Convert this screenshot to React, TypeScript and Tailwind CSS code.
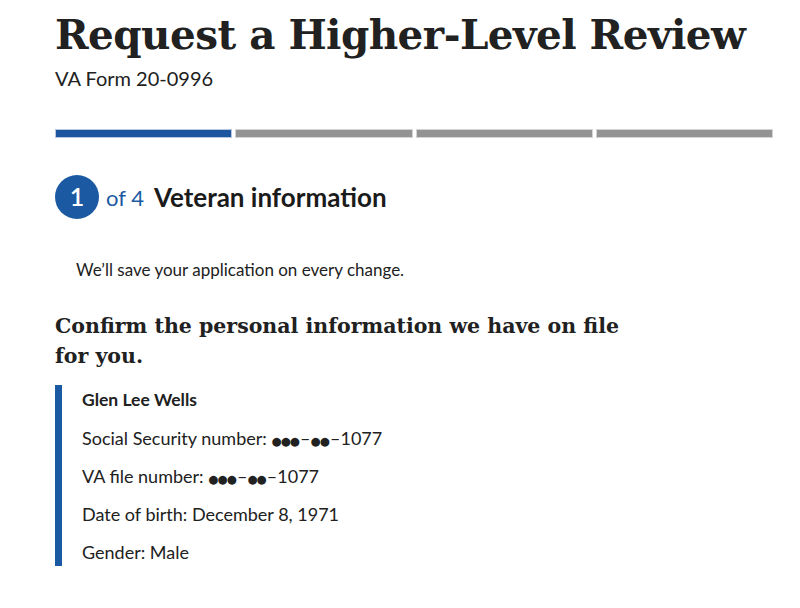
import React from 'react';

const serif = "font-['DejaVu_Serif',serif]";

const segments = [true, false, false, false];

const Dots = ({ n }: { n: number }) => (
  <span className="font-['DejaVu_Sans',sans-serif] text-[11.5px] leading-none tracking-[-0.8px] mr-[1px]">
    {'●'.repeat(n)}
  </span>
);

const row = 'text-[18px] leading-[22px] h-[22px] mt-[16px] whitespace-nowrap';

export default function App() {
  return (
    <div className="min-h-screen bg-white text-[#212121] font-['Lato',sans-serif]">
      <div className="pl-[55px] pr-[27px] pt-[9px]">
        {/* Title */}
        <h1 className={`${serif} font-bold text-[40.5px] leading-[52px] tracking-[-0.55px]`}>
          Request a Higher-Level Review
        </h1>
        <div className="text-[20px] leading-[26px] mt-[4px]">VA Form 20-0996</div>

        {/* Progress segments */}
        <div className="flex gap-[3px] mt-[38px]">
          {segments.map((done, i) => (
            <div
              key={i}
              className={
                done
                  ? 'flex-1 h-[9px] bg-[#1b55a0] border border-[#b9c6dd]'
                  : 'flex-1 h-[9px] bg-[#939393] border border-[#d4d4d4]'
              }
            />
          ))}
        </div>

        {/* Step heading */}
        <div className="flex items-center mt-[37px]">
          <div className="w-[44px] h-[44px] rounded-full bg-[#1b5aa2] text-white flex items-center justify-center text-[25px] font-semibold">
            1
          </div>
          <span className="ml-[7px] text-[#1b5aa2] text-[22px]">of 4</span>
          <span className="ml-[10px] font-bold text-[26px] text-[#1b1b1b]">Veteran information</span>
        </div>

        <p className="ml-[21px] mt-[39px] text-[17px] leading-[24px]">
          We’ll save your application on every change.
        </p>

        <h2 className={`${serif} font-bold text-[20.5px] leading-[30px] mt-[29px] max-w-[600px]`}>
          Confirm the personal information we have on file for you.
        </h2>

        {/* Veteran details */}
        <div className="mt-[14px] border-l-[7px] border-[#1b5aa2] pl-[20px] pt-[4px] pb-[3px] w-fit">
          <div className="font-bold text-[17.5px] leading-[22px] h-[22px]">Glen Lee Wells</div>
          <div className={row}>
            Social Security number: <Dots n={3} />–<Dots n={2} />–1077
          </div>
          <div className={row}>
            VA file number: <Dots n={3} />–<Dots n={2} />–1077
          </div>
          <div className={row}>Date of birth: December 8, 1971</div>
          <div className={row}>Gender: Male</div>
        </div>
      </div>
    </div>
  );
}
